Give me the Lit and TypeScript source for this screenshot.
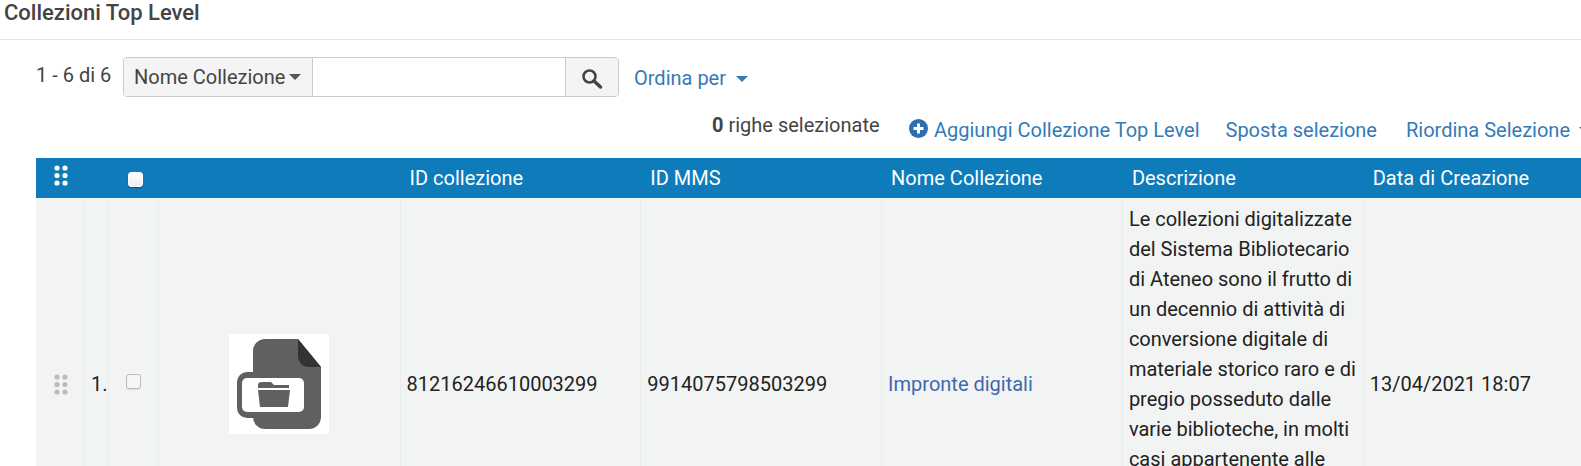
import { LitElement, html, css, svg } from "lit";
import { customElement } from "lit/decorators.js";

const dots = svg`<svg class="dots" width="14" height="21" viewBox="0 0 14 21" fill="currentColor">
  ${[3, 10.5, 18].flatMap((y) => [3, 11].map((x) => svg`<circle cx=${x} cy=${y} r="2.6"></circle>`))}
</svg>`;

const caret = html`<span class="caret"></span>`;

@customElement("app-root")
export class AppRoot extends LitElement {
  static styles = css`
    :host {
      display: block;
      width: 1581px;
      height: 466px;
      overflow: hidden;
      background: #fff;
      font-family: Roboto, "Noto Sans", sans-serif;
      font-size: 20px;
      color: #444;
    }
    .title {
      height: 39px;
      padding: 0 0 0 4px;
      border-bottom: 1px solid #e2e2e2;
      font-size: 22px;
      font-weight: 500;
      line-height: 25px;
      color: #444;
    }
    .search-row {
      display: flex;
      align-items: flex-start;
      padding: 17px 0 0 36px;
      height: 41px;
    }
    .count {
      width: 87px;
      line-height: 36px;
      white-space: nowrap;
    }
    .searchbox {
      display: flex;
      width: 496px;
      height: 40px;
      box-sizing: border-box;
      border: 1px solid #ccc;
      border-radius: 4px;
      overflow: hidden;
      background: #fff;
    }
    .select {
      width: 189px;
      box-sizing: border-box;
      display: flex;
      align-items: center;
      gap: 4px;
      padding-left: 10px;
      background: #f4f4f4;
      border-right: 1px solid #ccc;
      white-space: nowrap;
    }
    .input {
      flex: 1;
    }
    .btn {
      width: 52px;
      display: flex;
      align-items: center;
      justify-content: center;
      background: #f4f4f4;
      border-left: 1px solid #ccc;
      color: #444;
    }
    .caret {
      display: inline-block;
      flex: none;
      width: 0;
      height: 0;
      border-left: 6px solid transparent;
      border-right: 6px solid transparent;
      border-top: 6px solid #555;
    }
    .sort {
      margin-left: 15px;
      line-height: 43px;
      color: #337ab7;
      display: flex;
      align-items: center;
      gap: 10px;
    }
    .sort .caret {
      border-top-color: #337ab7;
    }
    .actions {
      display: flex;
      align-items: center;
      height: 60px;
      padding-left: 712px;
      white-space: nowrap;
    }
    .selected {
      flex: none;
      width: 197px;
      padding-bottom: 6px;
    }
    .selected b {
      font-weight: 700;
    }
    .link {
      flex: none;
      color: #337ab7;
      display: flex;
      align-items: center;
      padding-top: 4px;
    }
    .add {
      gap: 6px;
      margin-right: 26px;
    }
    .add svg {
      margin-bottom: 3px;
    }
    .move {
      margin-right: 29px;
    }
    .reorder {
      gap: 9px;
    }
    .table {
      margin-left: 36px;
      width: 1545px;
      overflow: hidden;
    }
    .thead,
    .row {
      display: grid;
      grid-template-columns: 48px 24px 50px 241.5px repeat(5, 240.8px);
    }
    .thead {
      height: 40px;
      background: #0e7bbb;
      color: #fff;
      font-weight: 400;
      align-items: center;
    }
    .thead .th {
      padding-left: 10px;
      white-space: nowrap;
    }
    .thead .handle {
      padding: 7px 0 0 18px;
      align-self: start;
      display: flex;
    }
    .thead .check {
      padding: 3px 0 0 20px;
      display: flex;
    }
    .thead .check .box {
      border-color: #fff;
      background: linear-gradient(#fff, #eee);
      box-shadow: 0 1px 1px rgba(0, 0, 0, 0.35);
    }
    .row {
      height: 372px;
      background: #f2f4f4;
      color: #222;
      overflow: hidden;
    }
    .cell {
      border-left: 1px solid #eaeded;
      padding: 0 0 0 6px;
      display: flex;
      align-items: center;
      min-width: 0;
      white-space: nowrap;
    }
    .cell:first-child {
      border-left: 0;
      padding-left: 18px;
      color: #bbb;
    }
    .num {
      padding-left: 6px;
    }
    .cb {
      padding: 0 0 5px 17px;
    }
    .box {
      display: block;
      width: 13px;
      height: 13px;
      border: 1px solid #bbb;
      border-radius: 3px;
      background: #f6f6f6;
      box-shadow: 0 1px 0 #ddd;
    }
    .pic {
      padding: 0 0 0 70px;
    }
    .pic svg {
      display: block;
    }
    .name {
      color: #3f68ad;
    }
    .desc {
      display: block;
      padding: 6px 6px;
      line-height: 30px;
      white-space: normal;
    }
    .desc span {
      display: block;
      white-space: nowrap;
    }
  `;

  render() {
    const lines = [
      "Le collezioni digitalizzate",
      "del Sistema Bibliotecario",
      "di Ateneo sono il frutto di",
      "un decennio di attività di",
      "conversione digitale di",
      "materiale storico raro e di",
      "pregio posseduto dalle",
      "varie biblioteche, in molti",
      "casi appartenente alle",
    ];
    return html`
      <div class="title">Collezioni Top Level</div>
      <div class="search-row">
        <div class="count">1 - 6 di 6</div>
        <div class="searchbox">
          <div class="select">Nome Collezione ${caret}</div>
          <div class="input"></div>
          <div class="btn">
            <svg width="22" height="24" viewBox="0 0 22 24" fill="none" stroke="#444">
              <circle cx="8.5" cy="11.5" r="6" stroke-width="2.6"></circle>
              <path d="M13 16L19.5 22" stroke-width="3.4" stroke-linecap="round"></path>
            </svg>
          </div>
        </div>
        <div class="sort">Ordina per ${caret}</div>
      </div>
      <div class="actions">
        <div class="selected"><b>0</b> righe selezionate</div>
        <div class="link add">
          <svg width="19" height="19" viewBox="0 0 19 19">
            <circle cx="9.5" cy="9.5" r="9.5" fill="#2f6fb0"></circle>
            <path d="M9.5 4.5v10M4.5 9.5h10" stroke="#fff" stroke-width="3"></path>
          </svg>
          Aggiungi Collezione Top Level
        </div>
        <div class="link move">Sposta selezione</div>
        <div class="link reorder">Riordina Selezione ${caret}</div>
      </div>
      <div class="table">
        <div class="thead">
          <div class="th handle">${dots}</div>
          <div></div>
          <div class="check"><span class="box"></span></div>
          <div></div>
          <div class="th">ID collezione</div>
          <div class="th">ID MMS</div>
          <div class="th">Nome Collezione</div>
          <div class="th">Descrizione</div>
          <div class="th">Data di Creazione</div>
        </div>
        <div class="row">
          <div class="cell">${dots}</div>
          <div class="cell num">1.</div>
          <div class="cell cb"><span class="box"></span></div>
          <div class="cell pic">
            <svg width="100" height="100" viewBox="0 0 100 100">
              <rect width="100" height="100" fill="#fff"></rect>
              <path d="M36 5H69L92 33V83a12 12 0 0 1-12 12H36a12 12 0 0 1-12-12V17a12 12 0 0 1 12-12z" fill="#606060"></path>
              <path d="M69 5L92 33H80a11 11 0 0 1-11-11z" fill="#333"></path>
              <rect x="8" y="38" width="40" height="46" rx="10" fill="#606060"></rect>
              <rect x="13" y="44" width="62" height="34" rx="5" fill="#fff"></rect>
              <path d="M33 48h9l3 3h15v3H29v-3q0-3 4-3zM29 56h32l-2 17H31z" fill="#606060"></path>
            </svg>
          </div>
          <div class="cell">81216246610003299</div>
          <div class="cell">9914075798503299</div>
          <div class="cell name">Impronte digitali</div>
          <div class="cell desc">${lines.map((l) => html`<span>${l}</span>`)}</div>
          <div class="cell">13/04/2021 18:07</div>
        </div>
      </div>
    `;
  }
}
